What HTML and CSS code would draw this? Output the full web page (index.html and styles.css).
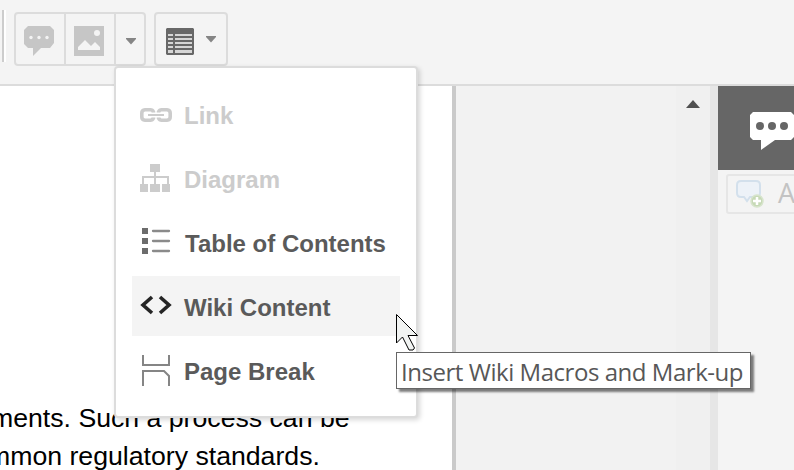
FILE: index.html
```html
<!DOCTYPE html>
<html lang="en">
<head>
<meta charset="utf-8">
<title>Editor</title>
<link rel="stylesheet" href="styles.css">
</head>
<body>
<div class="app">
  <header class="toolbar">
    <div class="separator"></div>
    <div class="group">
      <button class="tool"><svg width="30" height="31" viewBox="0 0 30 31"><path fill="#c6c6c6" d="M4 0h22l4 4v13l-4 5H17l-8 8V22H4l-4-4V4z"/><g fill="#f3f3f3"><circle cx="7" cy="11.5" r="1.7"/><circle cx="15" cy="11.5" r="1.7"/><circle cx="23" cy="11.5" r="1.7"/></g></svg></button>
      <button class="tool"><svg width="30" height="30" viewBox="0 0 30 30"><path fill="#c6c6c6" d="M0 0h30v30H0z"/><circle cx="23" cy="7" r="3" fill="#f4f4f4"/><path fill="#f4f4f4" d="M4 24v-3l7-7 6 6 4-4 5 5v3z"/></svg></button>
      <button class="tool narrow"><svg width="10" height="7" viewBox="0 0 10 7"><path fill="#858585" d="M0 0h10v1L5 6.5 0 1z"/></svg></button>
    </div>
    <div class="group table-group">
      <svg class="table-icon" width="28" height="27" viewBox="0 0 28 27"><path fill="#686868" d="M1 0h26l1 1v25l-1 1H1l-1-1V1z"/><path fill="#d6d6d6" d="M2 6h5v2H2zm7 0h17v2H9zM2 10h5v2H2zm7 0h17v2H9zM2 14h5v2H2zm7 0h17v2H9zM2 18h5v2H2zm7 0h17v2H9zM2 22h5v3H2zm7 0h17v3H9z"/></svg>
      <svg class="table-caret" width="10" height="7" viewBox="0 0 10 7"><path fill="#858585" d="M0 0h10v1L5 6.5 0 1z"/></svg>
    </div>
  </header>
  <main class="workspace">
    <article class="page">
      <p class="line first">ments. Such a process can be</p>
      <p class="line second">mmon regulatory standards.</p>
    </article>
    <div class="gutter"></div>
    <div class="scroll"><svg width="14" height="8" viewBox="0 0 14 8"><path fill="#505050" d="M7 0l7 8H0z"/></svg></div>
    <aside class="side">
      <div class="side-head"><svg width="44" height="39" viewBox="0 0 44 39"><path fill="#fff" d="M3 0h38l3 3v22l-3 3H25L11 38V28H3l-3-3V3z"/><g fill="#666"><circle cx="10" cy="14" r="4"/><circle cx="22" cy="14" r="4"/><circle cx="34" cy="14" r="4"/></g></svg></div>
      <button class="add"><svg width="28" height="28" viewBox="0 0 28 28"><path d="M5 1h15q4 0 4 4v8q0 4-4 4h-6l-3 4-3-4H5q-4 0-4-4V5q0-4 4-4z" fill="#edf2f8" stroke="#d3e0ec" stroke-width="2"/><circle cx="21" cy="21" r="6" fill="#c6d9b6" stroke="#d7e4cc" stroke-width="1.5"/><path d="M21 17v8m-4-4h8" stroke="#fff" stroke-width="2.5"/></svg><span>A</span></button>
    </aside>
  </main>

  <nav class="menu">
    <div class="item off"><svg class="icon" width="32" height="32" viewBox="0 0 32 32"><g fill="none" stroke="#ccc" stroke-width="3.6"><path d="M13.500 12.500V12q-1-2.200-3-2.200H5Q1.800 10 1.800 13v4q0 3 3.200 3.200h5.500q2 0 3-2.200v-.5M18.500 12.500V12q1-2.200 3-2.200H27q3.200.2 3.200 3.200v4q0 3-3.200 3.200h-5.500q-2 0-3-2.200v-.5"/><path d="M8 15h16" stroke-width="2"/></g></svg><span>Link</span></div>
    <div class="item off"><svg class="icon" width="32" height="32" viewBox="0 0 32 32"><path fill="#ccc" d="M10 0h10v8H10zM0 20h8v8H0zM10 20h10v8H10zM22 20h8v8h-8z"/><path fill="none" stroke="#ccc" stroke-width="2" d="M15 8v12M3 20v-7h25v7"/></svg><span>Diagram</span></div>
    <div class="item"><svg class="icon" width="32" height="32" viewBox="0 0 32 32"><path fill="#6c6c6c" d="M2 0h6v6H2zM2 10h6v6H2zM2 20h6v6H2z"/><path d="M13 3h16M13 13h16M13 23h16" stroke="#8a8a8a" stroke-width="2.300" stroke-linecap="round"/></svg><span class="toc">Table of Contents</span></div>
    <div class="item active"><svg class="icon" width="32" height="32" viewBox="0 0 32 32"><path d="M12 5L3 13l9 8M20 5l9 8-9 8" fill="none" stroke="#252525" stroke-width="3.600"/></svg><span>Wiki Content</span></div>
    <div class="item"><svg class="icon" width="32" height="34" viewBox="0 0 32 34"><path d="M3 0v10h26V0M3 31V16h21l5 5v10" fill="none" stroke="#858585" stroke-width="2"/></svg><span>Page Break</span></div>
  </nav>
  <div class="tooltip"><span>Insert Wiki Macros and Mark-up</span></div>
  <svg class="cursor" width="24" height="38" viewBox="0 0 24 38"><path fill="#f1f3f2" stroke="#000" stroke-width="1" d="M.500.500v28.500l6-6 6.500 13h4l1.500-2-6.500-12.500h9.500z"/></svg>
</div>
</body>
</html>
```
FILE: styles.css
```css
* { box-sizing: border-box; }
body { margin: 0; font-family: "Liberation Sans", Arial, sans-serif; }
.app { position: relative; width: 794px; height: 470px; overflow: hidden; display: flex; flex-direction: column; background: #f4f4f4; }
button { font: inherit; background: none; border: 0; padding: 0; margin: 0; }
svg { display: block; flex: none; }

.toolbar { height: 86px; flex: none; display: flex; align-items: flex-start; border-bottom: 2px solid #dcdcdc; }
.separator { width: 4px; height: 52px; margin: 10px 8px 0 2px; border-left: 2px solid #cdcdcd; border-right: 2px solid #fff; }
.group { height: 54px; margin-top: 12px; display: flex; border: 2px solid #dcdcdc; border-radius: 4px; }
.tool { width: 50px; height: 50px; display: flex; align-items: flex-start; padding: 12px 0 0 8px; border-right: 2px solid #dcdcdc; }
.tool.narrow { width: 28px; border-right: 0; padding: 24px 0 0 10px; }
.table-group { width: 74px; margin-left: 8px; padding-left: 10px; align-items: flex-start; }
.table-icon { margin-top: 14px; }
.table-caret { margin: 22px 0 0 12px; }

.workspace { flex: 1; display: flex; min-height: 0; }
.page { width: 456px; padding-top: 313px; background: #fff; border-right: 4px solid #cacaca; overflow: hidden; }
.line { margin: 0; font-size: 26.67px; line-height: 38px; white-space: nowrap; color: #000; }
.first { margin-left: -9px; }
.second { margin-left: -12px; }
.gutter { width: 220px; background: #f2f2f2; }
.scroll { width: 42px; padding: 14px 0 0 10px; background: #f0f0f0; border-right: 8px solid #e6e6e6; }
.side { width: 76px; overflow: hidden; background: #f4f4f4; }
.side-head { height: 84px; padding: 26px 0 0 32px; background: #666; }
.add { width: 110px; height: 40px; margin: 4px 0 0 8px; padding: 4px 0 0 8px; display: flex; gap: 14px; border: 2px solid #e6e6e6; border-radius: 3px; font: 27px/26px "Open Sans", sans-serif; color: #c3c3c3; }

.menu { position: absolute; left: 114px; top: 66px; width: 304px; height: 352px; padding: 16px; display: flex; flex-direction: column; gap: 4px; background: #fff; border: 2px solid #dcdcdc; border-radius: 4px; box-shadow: 2px 2px 5px rgba(0,0,0,.16); }
.item { height: 60px; flex: none; display: flex; align-items: center; padding: 4px 0 0 8px; gap: 12px; font-size: 24px; font-weight: 700; line-height: 28px; color: #5a5a5a; white-space: nowrap; }
.off { color: #ccc; }
.toc { margin-left: 1px; }
.active { background: #f4f4f4; }

.tooltip { position: absolute; left: 396px; top: 352px; width: 355px; height: 37px; padding-left: 4px; background: #fff; border: 1px solid #666; box-shadow: 3px 3px 2px rgba(0,0,0,.5); font: 24px/37px "Open Sans", sans-serif; letter-spacing: -.46px; color: #575757; white-space: nowrap; }
.cursor { position: absolute; left: 396px; top: 314px; }
```
